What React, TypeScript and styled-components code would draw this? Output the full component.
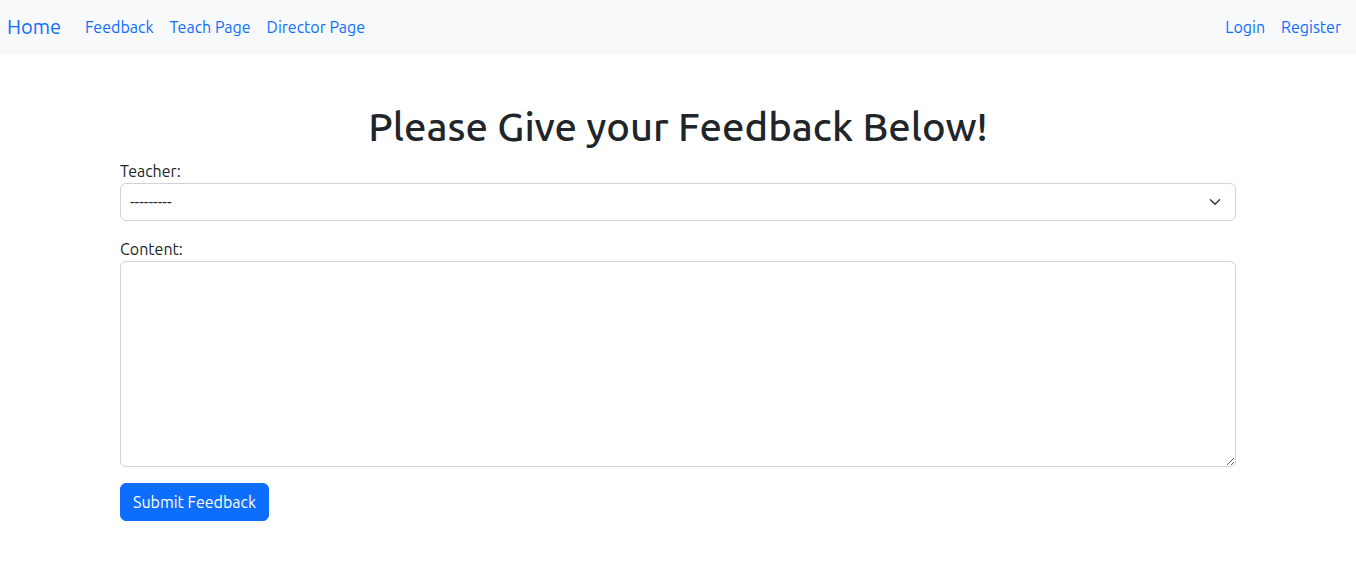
import { useState, ChangeEvent } from 'react';
import styled, { createGlobalStyle } from 'styled-components';

const GlobalStyle = createGlobalStyle`
  * {
    box-sizing: border-box;
  }

  body {
    margin: 0;
    background: #fff;
    color: #212529;
    font-family: Ubuntu, 'Open Sans', 'Noto Sans', sans-serif;
    font-size: 16px;
    line-height: 1.5;
  }
`;

const NAV_LEFT = ['Feedback', 'Teach Page', 'Director Page'];
const NAV_RIGHT = ['Login', 'Register'];

const CHEVRON =
  "url(\"data:image/svg+xml,%3csvg xmlns='http://www.w3.org/2000/svg' viewBox='0 0 16 16'%3e%3cpath fill='none' stroke='%23343a40' stroke-linecap='round' stroke-linejoin='round' stroke-width='2' d='m2 5 6 6 6-6'/%3e%3c/svg%3e\")";

export default function App() {
  const [teacher, setTeacher] = useState('');
  const [content, setContent] = useState('');

  const onChangeTeacher = (e: ChangeEvent<HTMLSelectElement>) => {
    setTeacher(e.target.value);
  };

  const onChangeContent = (e: ChangeEvent<HTMLTextAreaElement>) => {
    setContent(e.target.value);
  };

  return (
    <>
      <GlobalStyle />
      <Navbar>
        <Brand href='#'>Home</Brand>
        <NavList>
          {NAV_LEFT.map((item) => (
            <NavLink key={item} href='#'>
              {item}
            </NavLink>
          ))}
        </NavList>
        <NavList $end>
          {NAV_RIGHT.map((item) => (
            <NavLink key={item} href='#'>
              {item}
            </NavLink>
          ))}
        </NavList>
      </Navbar>

      <Container>
        <Title>Please Give your Feedback Below!</Title>
        <Form onSubmit={(e) => e.preventDefault()}>
          <Field>
            <Label htmlFor='teacher'>Teacher:</Label>
            <Select id='teacher' value={teacher} onChange={onChangeTeacher}>
              <option value=''>---------</option>
            </Select>
          </Field>
          <Field>
            <Label htmlFor='content'>Content:</Label>
            <TextArea id='content' value={content} onChange={onChangeContent} />
          </Field>
          <SubmitButton type='submit'>Submit Feedback</SubmitButton>
        </Form>
      </Container>
    </>
  );
}

// NAVBAR
const Navbar = styled.nav`
  display: flex;
  align-items: center;
  height: 55px;
  padding: 0 7px 2px 7px;
  background-color: #f8f9fa;
`;

const Brand = styled.a`
  font-size: 20px;
  line-height: 30px;
  color: #0d6efd;
  text-decoration: none;
  margin-right: 16px;
`;

const NavList = styled.div<{ $end?: boolean }>`
  display: flex;
  margin-left: ${(p) => (p.$end ? 'auto' : '0')};
`;

const NavLink = styled.a`
  padding: 8px;
  color: #0d6efd;
  text-decoration: none;
  font-size: 16px;
`;

// CONTENT
const Container = styled.main`
  width: 1140px;
  margin: 48px auto 0;
  padding: 0 12px;
`;

const Title = styled.h1`
  margin: 0 0 8px;
  font-size: 40px;
  font-weight: 500;
  line-height: 48px;
  text-align: center;
`;

const Form = styled.form`
  display: flex;
  flex-direction: column;
  align-items: flex-start;
`;

const Field = styled.div`
  width: 100%;
  display: flex;
  flex-direction: column;
  margin-bottom: 16px;
`;

const Label = styled.label`
  line-height: 24px;
`;

const Select = styled.select`
  appearance: none;
  width: 100%;
  height: 38px;
  padding: 6px 36px 6px 9px;
  font-family: inherit;
  font-size: 16px;
  color: #212529;
  background-color: #fff;
  background-image: ${CHEVRON};
  background-repeat: no-repeat;
  background-position: right 12px center;
  background-size: 16px 12px;
  border: 1px solid #ced4da;
  border-radius: 6px;
  outline: none;
`;

const TextArea = styled.textarea`
  width: 100%;
  height: 206px;
  padding: 6px 12px;
  font-family: inherit;
  font-size: 16px;
  color: #212529;
  border: 1px solid #ced4da;
  border-radius: 6px;
  outline: none;
  resize: vertical;
`;

const SubmitButton = styled.button`
  height: 38px;
  padding: 6px 12px;
  font-family: inherit;
  font-size: 16px;
  line-height: 24px;
  color: #fff;
  background-color: #0d6efd;
  border: 1px solid #0d6efd;
  border-radius: 6px;
  cursor: pointer;
`;
